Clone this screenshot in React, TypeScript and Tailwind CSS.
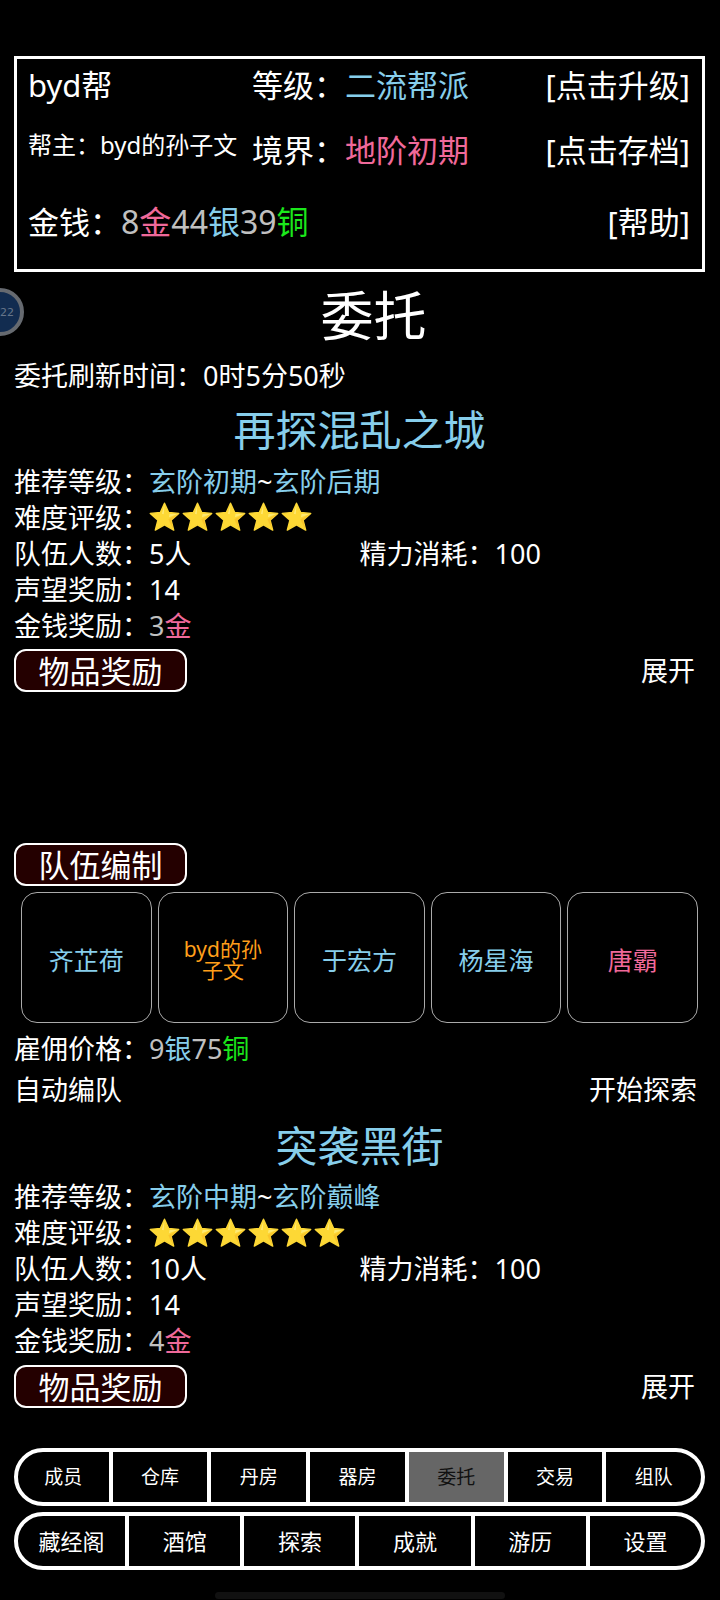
import type { ReactNode } from "react";

const blue = "text-[#87ceeb]";
const pink = "text-[#f0699a]";
const green = "text-[#1be81b]";
const silver = "text-[#c0c0c0]";

function Star() {
  return (
    <svg viewBox="0 0 32 32" className="size-8" aria-hidden="true">
      <path
        d="M15.5 2.2l4.2 9.3 10 .9-7.6 6.7 2.6 10-9.2-5.3-9.2 5.3 2.6-10-7.6-6.7 10-.9z"
        fill="#fdd835"
        stroke="#fdd835"
        strokeWidth="1.4"
        strokeLinejoin="round"
      />
      <path d="M15.5 3.5l-2.6 9.3 1.8.4zM20.5 13l8.5-.3-9 3.6z" fill="#fff59d" opacity=".6" />
      <path d="M29.6 12.8l-7.4 6.3 2.4 9.6-3.6-6.8-1.6-3.6z" fill="#f9b925" opacity=".6" />
    </svg>
  );
}

function Row({ label, children }: { label: string; children: ReactNode }) {
  return (
    <div className="flex h-9 items-center">
      <span>{label}：</span>
      <span className="flex items-center">{children}</span>
    </div>
  );
}

function SectionButton({ children }: { children: ReactNode }) {
  return (
    <button className="flex h-[43px] w-[173px] items-center justify-center rounded-xl border-2 border-white bg-[#240000] pt-0.5 text-[31px] leading-none">
      {children}
    </button>
  );
}

type QuestProps = {
  name: string;
  from: string;
  to: string;
  stars: number;
  team: number;
  gold: number;
  children?: ReactNode;
};

function Quest({ name, from, to, stars, team, gold, children }: QuestProps) {
  return (
    <section className="shrink-0">
      <h2 className={`flex h-[66px] items-center justify-center text-[42px] leading-none ${blue}`}>{name}</h2>
      <Row label="推荐等级">
        <span className={blue}>{from}</span>~<span className={blue}>{to}</span>
      </Row>
      <Row label="难度评级">
        <span className="flex gap-px" role="img" aria-label={`${stars}星`}>
          {Array.from({ length: stars }, (_, i) => (
            <Star key={i} />
          ))}
        </span>
      </Row>
      <div className="grid grid-cols-2">
        <Row label="队伍人数">{team}人</Row>
        <Row label="精力消耗">100</Row>
      </div>
      <Row label="声望奖励">14</Row>
      <Row label="金钱奖励">
        <span className={silver}>{gold}</span>
        <span className={pink}>金</span>
      </Row>
      <div className="mt-1.5 flex items-center justify-between">
        <SectionButton>物品奖励</SectionButton>
        <button className="mr-2.5">展开</button>
      </div>
      {children}
    </section>
  );
}

const members = [
  { name: "齐芷荷", style: "text-[25px] text-[#87ceeb]" },
  { name: "byd的孙子文", style: "text-[21px] text-[#ff9f1a]" },
  { name: "于宏方", style: "text-[25px] text-[#87ceeb]" },
  { name: "杨星海", style: "text-[25px] text-[#87ceeb]" },
  { name: "唐霸", style: "text-[25px] text-[#f0699a]" },
];

function NavBar({ items, active, layout, label }: { items: string[]; active?: string; layout: string; label: string }) {
  return (
    <nav aria-label={label} className={`grid h-[58px] ${layout}`}>
      {items.map((item) => (
        <button
          key={item}
          aria-current={item === active ? "page" : undefined}
          className={`border-y-4 border-r-4 border-white leading-none first:rounded-l-full first:border-l-4 last:rounded-r-full ${
            item === active ? "bg-[#666666] text-[#111111]" : ""
          }`}
        >
          {item}
        </button>
      ))}
    </nav>
  );
}

export default function App() {
  return (
    <div className="relative flex h-screen flex-col overflow-hidden bg-black pt-14 pr-[15px] pl-3.5 font-['Noto_Sans','Noto_Sans_CJK_SC',sans-serif] text-[27px] leading-none text-white">
      <header className="flex h-[216px] shrink-0 flex-col border-3 border-white pr-3 pl-[11px] text-[31px]">
        <div className="grid grid-cols-[224px_1fr_auto]">
          <div className="flex h-[52px] items-center">byd帮</div>
          <div className="flex items-center">
            等级：<span className={blue}>二流帮派</span>
          </div>
          <button>[点击升级]</button>
          <div className="flex h-[78px] items-center pb-2.5 text-2xl leading-none whitespace-nowrap">帮主：byd的孙子文</div>
          <div className="flex items-center">
            境界：<span className={pink}>地阶初期</span>
          </div>
          <button>[点击存档]</button>
        </div>
        <div className="flex h-[66px] items-center justify-between">
          <div className="flex items-center">
            <span>金钱：</span>
            <span className={`text-[32px] leading-none ${silver}`}>
              8<span className={pink}>金</span>44
              <span className={blue}>银</span>39<span className={green}>铜</span>
            </span>
          </div>
          <button>[帮助]</button>
        </div>
      </header>

      <main className="flex min-h-0 flex-1 flex-col overflow-hidden">
        <h1 className="flex h-[85px] shrink-0 items-center justify-center pt-0.5 pl-7 text-[53px]">委托</h1>
        <p className="mb-1 flex h-9 shrink-0 items-center">委托刷新时间：0时5分50秒</p>
        <Quest name="再探混乱之城" from="玄阶初期" to="玄阶后期" stars={5} team={5} gold={3}>
          <div className="h-[151px]" />
          <SectionButton>队伍编制</SectionButton>
          <ul className="mx-[7px] mt-1.5 grid grid-cols-5 gap-1.5">
            {members.map((m) => (
              <li key={m.name}>
                <button
                  className={`flex aspect-square w-full items-center justify-center rounded-2xl border border-[#aaaaaa] px-5 pt-1.5 leading-none ${m.style}`}
                >
                  {m.name}
                </button>
              </li>
            ))}
          </ul>
          <div className="pt-2">
            <Row label="雇佣价格">
              <span className={silver}>9</span>
              <span className={blue}>银</span>
              <span className={silver}>75</span>
              <span className={green}>铜</span>
            </Row>
          </div>
          <div className="flex h-[46px] items-center justify-between pr-2">
            <button>自动编队</button>
            <button>开始探索</button>
          </div>
        </Quest>
        <Quest name="突袭黑街" from="玄阶中期" to="玄阶巅峰" stars={6} team={10} gold={4} />
      </main>

      <footer className="flex shrink-0 flex-col gap-1.5">
        <NavBar
          label="主导航"
          items={["成员", "仓库", "丹房", "器房", "委托", "交易", "组队"]}
          active="委托"
          layout="grid-cols-7 text-[19px]"
        />
        <NavBar
          label="副导航"
          items={["藏经阁", "酒馆", "探索", "成就", "游历", "设置"]}
          layout="grid-cols-6 text-[22px]"
        />
        <div className="mt-4 mb-px h-[7px] w-[290px] self-center rounded-full bg-[#111111]" />
      </footer>

      <div className="absolute top-72 -left-6 flex size-12 items-center justify-end rounded-full border-4 border-[#666a70] bg-[#122c50] pr-1.5 font-['DejaVu_Sans',sans-serif] text-[11px] leading-none text-[#66758a]">
        22
      </div>
    </div>
  );
}
